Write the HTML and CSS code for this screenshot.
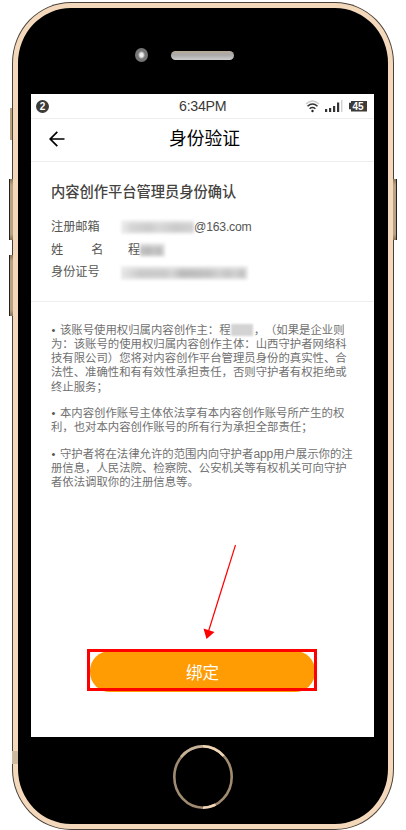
FILE: index.html
```html
<!DOCTYPE html>
<html lang="zh-CN">
<head>
<meta charset="utf-8">
<title>身份验证</title>
<link rel="stylesheet" href="styles.css">
</head>
<body>
<div class="phone">
  <i class="key key-mute"></i><i class="key key-up"></i><i class="key key-down"></i><i class="key key-power"></i><i class="antenna"></i>
  <div class="body">
    <div class="top"><span class="camera"></span><span class="speaker"></span></div>
    <main class="screen">
      <div class="status">
        <span class="count">2</span>
        <span class="time">6:34PM</span>
        <span class="indicators">
          <svg class="wifi" width="15" height="13" viewBox="0 0 15 13" fill="none" stroke-width="1.3"><path d="M1 4Q7.500-2 14 4" stroke="#ccc"/><path d="M2.500 6.300Q7.500 1.800 12.500 6.300M4.600 8.800Q7.500 6.300 10.400 8.800" stroke="#333" stroke-width="1.500"/><circle cx="7.500" cy="11" r="1.200" fill="#222"/></svg>
          <svg class="signal" width="18" height="12" viewBox="0 0 18 12"><path d="M0 9h2.200v3H0zM4 8h2.200v4H4zM8 6h2.200v6H8zM12 2.500h2.200V12H12z" fill="#333"/><path d="M16 0h1.500v12H16z" fill="#d2d2d2"/></svg>
          <span class="battery">45</span>
        </span>
      </div>
      <header class="nav">
        <svg class="back" width="16" height="16" viewBox="0 0 16 16" fill="none" stroke="#000" stroke-width="1.700"><path d="M15.500 8H1.500M8.300 .8L1.200 8l7.100 7.200"/></svg>
        <h1>身份验证</h1>
      </header>
      <section class="identity">
        <h2>内容创作平台管理员身份确认</h2>
        <div class="row"><span class="label">注册邮箱</span><span class="mask mask-mail"></span><span class="mail">@163.com</span></div>
        <div class="row"><span class="label spread"><span>姓</span><span>名</span></span><span class="name">程</span><span class="mask mask-name"></span></div>
        <div class="row"><span class="label">身份证号</span><span class="mask mask-id"></span></div>
      </section>
      <section class="terms">
        <p><b>•</b>该账号使用权归属内容创作主：程<span class="mask mask-inline"></span>，（如果是企业则<br>为：该账号的使用权归属内容创作主体：山西守护者网络科<br>技有限公司）您将对内容创作平台管理员身份的真实性、合<br>法性、准确性和有有效性承担责任，否则守护者有权拒绝或<br>终止服务；</p>
        <p><b>•</b>本内容创作账号主体依法享有本内容创作账号所产生的权<br>利，也对本内容创作账号的所有行为承担全部责任；</p>
        <p><b>•</b>守护者将在法律允许的范围内向守护者<span class="app">app</span>用户展示你的注<br>册信息，人民法院、检察院、公安机关等有权机关可向守护<br>者依法调取你的注册信息等。</p>
      </section>
      <div class="action">
        <button class="bind">绑定</button>
        <span class="highlight"></span>
        <svg class="arrow" width="36" height="98" viewBox="0 0 36 98"><path d="M32.500 2L5.300 89" stroke="#f00" stroke-width="1.200"/><path d="M3.500 96L.5 85.500 11.500 89z" fill="#f00"/></svg>
      </div>
    </main>
    <div class="bottom"><svg class="home" width="62" height="66" viewBox="0 0 62 66" fill="none" stroke-width="2.600"><ellipse cx="31" cy="33" rx="28.700" ry="30.700" stroke="#a08a70"/><path d="M9 13Q17 3 31 2.300" stroke="#c6b299"/><path d="M31 2.300Q43 2.500 51.500 12M31 63.700Q38 63.500 43.500 60.700" stroke="#f1d6b8"/></svg></div>
  </div>
</div>
</body>
</html>
```

FILE: styles.css
```css
* { box-sizing: border-box; }
body {
  margin: 0;
  width: 406px;
  height: 830px;
  overflow: hidden;
  background: #fff;
  font-family: "Liberation Sans", "Noto Sans CJK SC", sans-serif;
  text-spacing-trim: space-all;
}
.phone {
  position: relative;
  width: 382px;
  height: 828px;
  margin: 2px 0 0 12px;
  padding: 1px;
  border-radius: 59px / 61px;
  background: #4a4239;
}
.body {
  height: 826px;
  border: 5px solid #f3d8bb;
  border-radius: 58px / 60px;
  background: #000;
  display: flex;
  flex-direction: column;
  padding-left: 13px;
}
.top {
  height: 86px;
  padding: 40px 0 0 104px;
  display: flex;
  align-items: flex-start;
}
.camera {
  width: 13px;
  height: 14px;
  border: 3px solid #777;
  border-radius: 50%;
  background: radial-gradient(#eee 30%, #777 75%);
}
.speaker {
  width: 63px;
  height: 9px;
  margin: 3px 0 0 23px;
  border-radius: 5px;
  background: linear-gradient(#b8aa98, #aaa 45%, #ccc);
}
.screen {
  width: 343px;
  height: 643px;
  background: #fff;
  display: flex;
  flex-direction: column;
}
.status {
  height: 25px;
  border-bottom: 1px solid #eee;
  display: grid;
  grid-template-columns: 148px 1fr 67px;
  align-items: center;
  padding: 0 6px 0 0;
}
.count {
  width: 13px;
  height: 13px;
  margin-left: 5px;
  border-radius: 50%;
  background: #3c3b38;
  color: #fff;
  font: bold 10px/13px "Liberation Sans", sans-serif;
  text-align: center;
}
.time {
  font-size: 14.200px;
  letter-spacing: -.250px;
  line-height: 24px;
  color: #3a3936;
  white-space: nowrap;
}
.indicators { display: flex; align-items: center; }
.wifi { margin-left: 4px; }
.wifi, .signal { flex: none; }
.signal { margin-left: 5px; }
.battery {
  flex: none;
  width: 18px;
  height: 11px;
  margin-left: 6px;
  background: #3c3b38;
  color: #fff;
  font: bold 10px/11px "Liberation Sans", sans-serif;
  text-align: center;
  clip-path: polygon(2px 0, 100% 0, 100% 100%, 2px 100%, 2px 80%, 0 80%, 0 20%, 2px 20%);
}
.nav {
  height: 43px;
  border-bottom: 1px solid #eee;
  display: grid;
  grid-template-columns: 138px 1fr;
  align-items: center;
}
.back { margin: -3px 0 0 18px; }
h1 {
  margin: -3px 0 0;
  font-weight: 400;
  font-size: 17.800px;
  line-height: 24px;
  color: #000;
}
.identity {
  height: 140px;
  padding: 20px 0 0 20px;
  border-bottom: 1px solid #eee;
}
h2 {
  margin: 0 0 14px;
  font-weight: 500;
  font-size: 14.250px;
  line-height: 20px;
  color: #44433f;
}
.row {
  height: 22.700px;
  display: flex;
  align-items: center;
  font-size: 12.200px;
  line-height: 22.700px;
  color: #555552;
}
.label { width: 70px; }
.spread { display: flex; gap: 28px; width: 77px; }
.mask {
  display: inline-block;
  height: 14px;
  filter: blur(1.500px);
  background: linear-gradient(#f0f0f0, #cbcbcb 50%, #f0f0f0);
}
.mask-mail { width: 73px; background: linear-gradient(#f2f2f2, transparent 35%, transparent 75%, #f0f0f0), linear-gradient(90deg, #eee, #d5d5d5 14%, #ccc 38%, #d8d8d8 52%, #cacaca 75%, #d2d2d2); }
.mask-name { width: 25px; background: linear-gradient(#eee, transparent 40%, transparent 75%, #e8e8e8), linear-gradient(90deg, #c2c2c2, #b8b8b8 35%, #c4c4c4 55%, #bbb 80%, #e5e5e5); }
.mask-id { width: 127px; background: linear-gradient(#eee, transparent 40%, transparent 70%, #eee), linear-gradient(90deg, #e8e8e8, #c9c9c9 15%, #cacaca 35%, #d5d5d5 40%, #bababa 48%, #c2c2c2 70%, #d0d0d0 77%, #c5c5c5 84%, #d0d0d0 90%, #c0c0c0 96%, #eee); }
.mail { font-size: 12.200px; letter-spacing: -.200px; }
.terms {
  height: 249px;
  padding: 21px 0 0 20px;
  font-size: 11.380px;
  line-height: 14.150px;
  color: #707070;
  white-space: nowrap;
}
.terms p { margin: 0 0 12.500px; }
.terms b { display: inline-block; width: 9px; font: 11px/14px "Liberation Sans", sans-serif; color: #555; text-indent: .5px; }
.app { font-size: 12px; letter-spacing: -.1px; }
.mask-inline { width: 22px; height: 12px; margin-right: 1px; vertical-align: -2px; filter: blur(1px); background: #d3d3d3; }
.action {
  position: relative;
  margin: 100px 0 0 59px;
  width: 225px;
  height: 40px;
}
.bind {
  display: block;
  width: 225px;
  height: 41px;
  padding: 0;
  border: 0;
  border-radius: 20px;
  background: #ff9c03;
  color: #fff;
  font-family: "Noto Sans CJK SC", sans-serif;
  font-size: 16.500px;
  line-height: 40px;
}
.highlight {
  position: absolute;
  left: -3px;
  top: -2px;
  width: 230px;
  height: 42px;
  border: 3px solid #f00;
}
.arrow { position: absolute; left: 113px; top: -108px; }
.bottom { height: 86px; display: flex; justify-content: center; padding: 7px 13px 0 0; }
.home { flex: none; }
.key {
  position: absolute;
  left: -2px;
  width: 2px;
  background: #b9a284;
}
.key-mute { top: 106px; height: 32px; }
.key-up, .key-down { left: -3px; width: 4px; height: 61px; border-left: 1px solid #222; background: linear-gradient(#8a745a, #b9a284 10%, #b9a284 90%, #8a745a); }
.key-up { top: 177px; }
.key-down { top: 253px; }
.key-power { left: auto; right: -3px; top: 177px; width: 4px; height: 61px; border-right: 1px solid #222; background: linear-gradient(#8a745a, #b9a284 10%, #b9a284 90%, #8a745a); }
.antenna { position: absolute; left: 0; top: 749px; width: 6px; height: 13px; background: #cdb99f; z-index: 1; }
```
